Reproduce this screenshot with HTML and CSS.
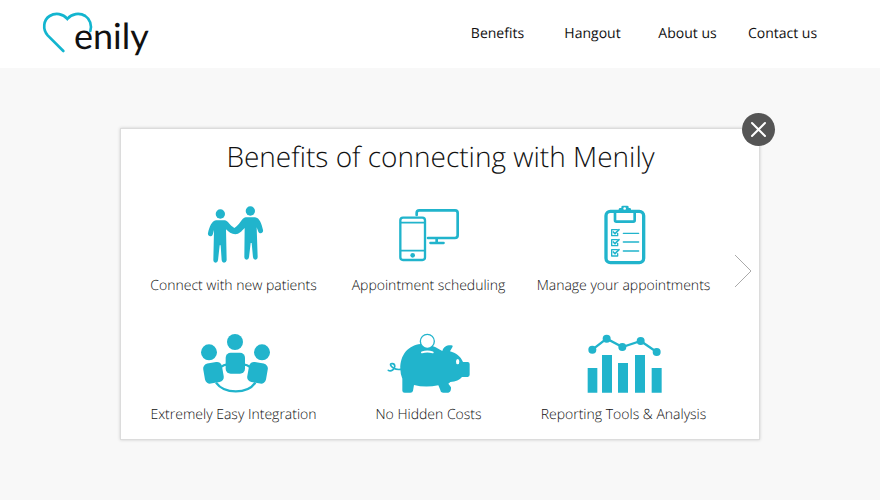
FILE: index.html
```html
<!DOCTYPE html>
<html lang="en">
<head>
<meta charset="utf-8">
<meta name="viewport" content="width=device-width, initial-scale=1">
<title>Menily</title>
<link rel="stylesheet" href="styles.css">
</head>
<body>
<header class="header">
  <a class="logo" href="#" aria-label="Menily">
    <svg class="logo-heart" viewBox="0 0 156 126" aria-hidden="true">
      <path d="M61 114 L14 67 C-2 49 1 21 20 9 C38-2 60 2 73 18 C86 2 109-2 127 9 C141 18 147 36 142 54"/>
    </svg>
    <span class="logo-text">enily</span>
  </a>
  <nav class="nav">
    <a href="#">Benefits</a>
    <a href="#">Hangout</a>
    <a href="#">About us</a>
    <a href="#">Contact us</a>
  </nav>
</header>
<main class="main">
  <section class="card">
    <h1 class="title">Benefits of connecting with Menily</h1>
    <ul class="benefits">
      <li>
        <svg class="icon" viewBox="-6 0 270 225" aria-hidden="true">
          <circle cx="88" cy="57" r="14"/><circle cx="178" cy="48" r="14"/>
          <path d="M75 76 H101 C111 77 116 91 130 99 C145 92 152 69 164 67 H192 C206 68 212 88 216 105 C218 115 206 118 202 110 L197 97 L200 187 Q200 194 193 194 Q187 194 186 187 L182 144 H179 L174 187 Q173 194 167 194 Q160 194 160 187 L161 99 C151 109 145 117 133 118 C122 117 112 111 105 103 L107 196 Q106 203 99 203 Q93 203 92 196 L89 151 H86 L81 196 Q80 203 74 203 Q67 203 67 196 L69 105 L65 119 C61 127 49 124 51 114 C55 97 61 79 75 76Z"/>
        </svg>
        <span>Connect with new patients</span>
      </li>
      <li>
        <svg class="icon line" viewBox="-6 0 270 225" aria-hidden="true">
          <path d="M92 60 V54 Q92 46 100 46 H207 Q215 46 215 54 V121 Q215 129 207 129 H126 M152 130 V143" stroke-width="8"/>
          <path d="M133 144 H173" stroke-width="7"/>
          <rect x="43" y="68" width="74" height="127" rx="8" stroke-width="7"/>
          <path d="M44 83 H116 M44 167 H116" stroke-width="5"/>
          <circle cx="80" cy="181" r="7" class="solid"/>
        </svg>
        <span>Appointment scheduling</span>
      </li>
      <li>
        <svg class="icon line" viewBox="-21 0 270 225" aria-hidden="true">
          <rect x="60" y="49" width="113" height="154" rx="13" stroke-width="10"/>
          <path d="M87 52 V76 Q87 80 91 80 H142 Q146 80 146 76 V52" stroke-width="8"/>
          <path class="solid" fill-rule="evenodd" d="M98 49 V43 Q98 39 103 39 H106 V36 Q106 32 111 32 H123 Q128 32 128 36 V39 H131 Q135 39 135 43 V49Z M112 41 A4 4 0 1 0 120 41 A4 4 0 1 0 112 41Z"/>
          <g stroke-width="4">
            <path d="M94 104 H77 V122 H95 V115 M94 134 H77 V152 H95 V145 M94 164 H77 V183 H95 V176"/>
            <path d="M112 115 H158 M112 141 H158 M112 168 H158"/>
          </g>
          <path d="M82 111 L87 116 L99 104 M82 141 L87 146 L99 134 M82 171 L87 176 L99 164" stroke-width="5"/>
        </svg>
        <span>Manage your appointments</span>
      </li>
      <li>
        <svg class="icon" viewBox="-6 -3 270 225" aria-hidden="true">
          <circle cx="54" cy="82" r="24"/><circle cx="132" cy="51" r="24"/><circle cx="213" cy="82" r="24"/>
          <path class="arc" d="M92 125 Q98 120 106 119 M160 119 Q168 120 176 125 M75 173 C100 208 169 208 193 173"/>
          <rect x="104" y="83" width="58" height="63" rx="15"/>
          <rect x="39" y="113" width="57" height="61" rx="15" transform="rotate(-10 67 144)"/>
          <rect x="171" y="113" width="57" height="61" rx="15" transform="rotate(10 200 144)"/>
        </svg>
        <span>Extremely Easy Integration</span>
      </li>
      <li>
        <svg class="icon" viewBox="9 -3 270 225" aria-hidden="true">
          <path d="M58 132 C57 89 82 61 119 57 Q150 56 177 74 L184 78 C187 66 197 60 211 61 Q217 61 214 67 L207 79 C224 84 239 94 246 111 H260 Q266 111 266 117 V149 Q266 155 260 156 H243 C236 165 224 170 208 171 L202 176 L210 187 Q211 202 202 203 H187 Q179 203 178 195 L172 181 Q133 189 99 180 L96 197 Q95 203 88 203 H71 Q64 203 64 197 V161 Q58 147 58 132Z"/>
          <circle class="coin" cx="139" cy="49" r="21"/>
          <path class="slot" d="M123 82 Q139 77 155 82"/>
          <ellipse class="eye" cx="230" cy="110" rx="5" ry="8"/>
          <path class="tail" d="M59 133 Q47 135 37 129 C28 124 25 115 34 116 C45 117 42 131 35 135 Q28 140 22 136"/>
        </svg>
        <span>No Hidden Costs</span>
      </li>
      <li>
        <svg class="icon" viewBox="9 -3 270 225" aria-hidden="true">
          <path d="M35 129 H64 V203 H35Z M78 90 H108 V203 H78Z M126 114 H156 V203 H126Z M177 90 H207 V203 H177Z M227 129 H257 V203 H227Z"/>
          <path class="arc" d="M49 74 L92 41 L139 66 L194 48 L242 81"/>
          <circle cx="49" cy="74" r="12"/><circle cx="92" cy="41" r="12"/><circle cx="139" cy="66" r="12"/><circle cx="194" cy="48" r="12"/><circle cx="242" cy="81" r="12"/>
        </svg>
        <span>Reporting Tools &amp; Analysis</span>
      </li>
    </ul>
    <button class="close" type="button" aria-label="Close">
      <svg viewBox="0 0 33 33" aria-hidden="true"><path d="M10 10 L23 23 M23 10 L10 23"/></svg>
    </button>
    <button class="next" type="button" aria-label="Next">
      <svg viewBox="0 0 20 36" aria-hidden="true"><path d="M2 2 L18 18 L2 34"/></svg>
    </button>
  </section>
</main>
</body>
</html>
```
FILE: styles.css
```css
* {
  box-sizing: border-box;
}

body {
  margin: 0;
  min-height: 100vh;
  background: #f8f8f8;
  color: #111;
  font-family: "Open Sans", sans-serif;
  text-rendering: geometricPrecision;
}

.header {
  display: flex;
  justify-content: space-between;
  align-items: center;
  height: 68px;
  padding: 0 50px 0 43px;
  background: #fff;
}

.logo {
  display: flex;
  align-items: flex-start;
  height: 42px;
  color: #111;
  text-decoration: none;
}

.logo-heart {
  width: 52px;
  height: 42px;
  overflow: visible;
  fill: none;
  stroke: #13b5cf;
  stroke-width: 8;
  stroke-linecap: round;
}

.logo-text {
  margin: 4px 0 0 -21px;
  font-family: Lato, sans-serif;
  font-size: 36px;
  line-height: 36px;
}

.nav {
  display: grid;
  grid-template-columns: repeat(4, 95px);
  text-align: center;
}

.nav a {
  color: #111;
  font-size: 14px;
  line-height: 20px;
  text-decoration: none;
}

.main {
  padding: 60px 24px;
}

.card {
  position: relative;
  max-width: 640px;
  margin: 0 auto;
  padding: 9px 38px 14px 15px;
  background: #fff;
  border: 1px solid #dcdcdc;
  box-shadow: 0 0 3px rgba(0, 0, 0, 0.18);
}

.title {
  margin: 0 -24px 0 0;
  font-size: 28px;
  font-weight: 300;
  line-height: 38px;
  text-align: center;
}

.benefits {
  display: grid;
  grid-template-columns: repeat(3, 1fr);
  row-gap: 28px;
  margin: 19px 0 0;
  padding: 0;
  list-style: none;
}

.benefits li {
  display: flex;
  flex-direction: column;
  align-items: center;
  gap: 6px;
  font-size: 14px;
  font-weight: 300;
  line-height: 20px;
  white-space: nowrap;
}

.icon {
  width: 90px;
  height: 75px;
  fill: #21b4cc;
}

.line {
  fill: none;
  stroke: #21b4cc;
  stroke-linecap: round;
  stroke-linejoin: round;
}

.solid {
  fill: #21b4cc;
  stroke: none;
}

.arc,
.tail {
  fill: none;
  stroke: #21b4cc;
  stroke-width: 7;
}

.tail {
  stroke-width: 5;
  stroke-linecap: round;
}

.coin {
  fill: #fff;
  stroke: #21b4cc;
  stroke-width: 4;
}

.slot {
  fill: none;
  stroke: #fff;
  stroke-width: 6;
  stroke-linecap: round;
}

.eye {
  fill: #fff;
}

.close,
.next {
  position: absolute;
  padding: 0;
  border: 0;
  background: none;
  cursor: pointer;
}

.close svg,
.next svg {
  display: block;
  width: 100%;
  fill: none;
}

.close {
  top: -16px;
  right: -16px;
  width: 33px;
  height: 33px;
  border-radius: 50%;
  background: #555;
}

.close svg {
  stroke: #fff;
  stroke-width: 2;
  stroke-linecap: round;
}

.next {
  top: 124px;
  right: 6px;
  width: 20px;
  height: 36px;
}

.next svg {
  stroke: #aaa;
  stroke-width: 1;
}
```
